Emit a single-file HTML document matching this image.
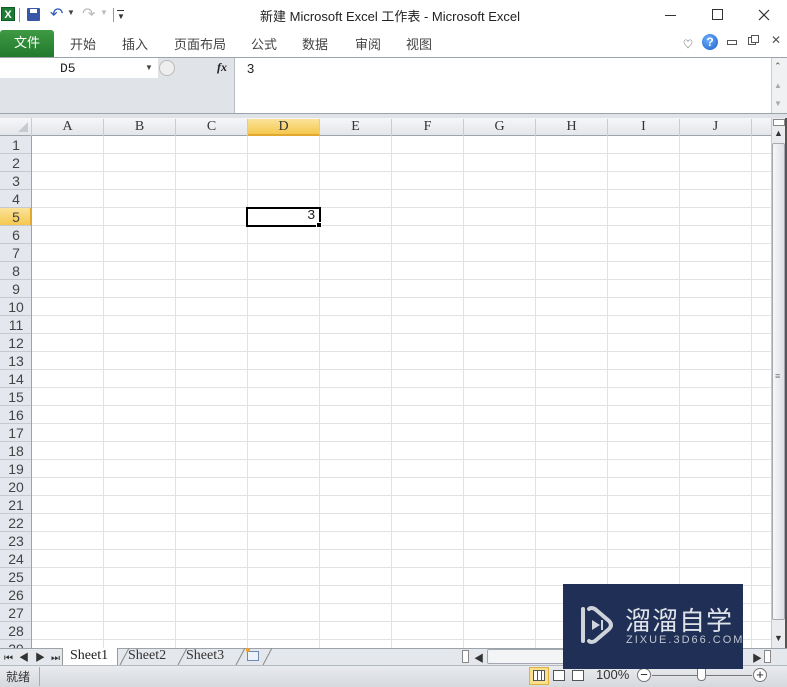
<!DOCTYPE html>
<html><head><meta charset="utf-8">
<style>
*{margin:0;padding:0;box-sizing:border-box}
body{width:787px;height:687px;position:relative;overflow:hidden;background:#fff;font-family:"Liberation Sans","Noto Sans CJK SC",sans-serif;font-size:13px;color:#222}
.a{position:absolute}
.tab{position:absolute;top:34px;font-size:13px;color:#444}
.ch{position:absolute;top:119px;height:17px;text-align:center;font-family:"Liberation Serif",serif;font-size:14px;color:#333;border-right:1px solid #c8ccd2}
.rh{position:absolute;left:0;width:32px;height:18px;text-align:center;font-size:14px;color:#444;line-height:18px;font-family:"Liberation Sans",sans-serif}
</style></head><body>
<div class="a" style="left:0;top:0;width:787px;height:30px;background:#fff"></div>
<div class="a" style="left:1px;top:7px;width:14px;height:14px;background:#1e7b34;color:#fff;font-size:11px;font-weight:bold;text-align:center;line-height:14px;border:1px solid #0d5a22">X</div>
<div class="a" style="left:19px;top:8px;width:1px;height:14px;background:#999"></div>
<div class="a" style="left:27px;top:8px;width:13px;height:13px;background:#3a56a8;border-radius:1px"></div>
<div class="a" style="left:30px;top:9px;width:7px;height:4px;background:#fff"></div>
<div class="a" style="left:50px;top:4px;font-size:16px;color:#2a5bb8">↶</div>
<div class="a" style="left:67px;top:8px;font-size:8px;color:#444">▼</div>
<div class="a" style="left:82px;top:4px;font-size:16px;color:#bbb">↷</div>
<div class="a" style="left:100px;top:8px;font-size:8px;color:#bbb">▼</div>
<div class="a" style="left:113px;top:8px;width:1px;height:14px;background:#999"></div>
<div class="a" style="left:117px;top:10px;width:7px;height:1px;background:#333"></div>
<div class="a" style="left:117px;top:12px;font-size:8px;color:#333">▼</div>
<div class="a" style="left:260px;top:6px;font-size:13px;color:#222">新建 Microsoft Excel 工作表 - Microsoft Excel</div>
<div class="a" style="left:665px;top:15px;width:11px;height:1px;background:#333"></div>
<div class="a" style="left:712px;top:9px;width:11px;height:11px;border:1px solid #333"></div>
<svg class="a" style="left:758px;top:9px" width="12" height="12"><path d="M1 1L11 11M11 1L1 11" stroke="#333" stroke-width="1.2"/></svg>
<div class="a" style="left:0;top:30px;width:54px;height:27px;background:linear-gradient(#3e9a43,#217a2c);border-radius:3px 3px 0 0;color:#fff;font-size:13px;text-align:center;line-height:26px">文件</div>
<div class="tab" style="left:70px">开始</div>
<div class="tab" style="left:122px">插入</div>
<div class="tab" style="left:174px">页面布局</div>
<div class="tab" style="left:251px">公式</div>
<div class="tab" style="left:302px">数据</div>
<div class="tab" style="left:355px">审阅</div>
<div class="tab" style="left:406px">视图</div>
<div class="a" style="left:683px;top:36px;font-size:10px;color:#555">♡</div>
<div class="a" style="left:702px;top:34px;width:16px;height:16px;border-radius:50%;background:radial-gradient(circle at 40% 35%,#6fb0ff,#1a5fc8);color:#fff;font-size:12px;font-weight:bold;text-align:center;line-height:16px">?</div>
<div class="a" style="left:727px;top:40px;width:10px;height:5px;border:1px solid #555"></div>
<div class="a" style="left:748px;top:37px;width:8px;height:8px;border:1px solid #555"></div>
<div class="a" style="left:751px;top:35px;width:8px;height:8px;border:1px solid #555;background:#fff"></div>
<div class="a" style="left:771px;top:33px;font-size:12px;color:#555">✕</div>
<div class="a" style="left:0;top:57px;width:787px;height:1px;background:#9da3ab"></div>
<div class="a" style="left:0;top:58px;width:787px;height:56px;background:#fff"></div>
<div class="a" style="left:0;top:78px;width:234px;height:36px;background:#e0e3e8"></div>
<div class="a" style="left:0;top:58px;width:157px;height:20px;background:#fff"></div>
<div class="a" style="left:60px;top:61px;font-family:'Liberation Mono',monospace;font-size:13px">D5</div>
<div class="a" style="left:145px;top:63px;font-size:8px;color:#444">▼</div>
<div class="a" style="left:158px;top:58px;width:76px;height:20px;background:#e0e3e8"></div>
<div class="a" style="left:159px;top:60px;width:16px;height:16px;border-radius:50%;border:1px solid #bbb;background:#eee"></div>
<div class="a" style="left:217px;top:60px;font-family:'Liberation Serif',serif;font-style:italic;font-weight:bold;font-size:12px">fx</div>
<div class="a" style="left:234px;top:58px;width:1px;height:56px;background:#b8bcc3"></div>
<div class="a" style="left:247px;top:61px;font-size:13px">3</div>
<div class="a" style="left:771px;top:58px;width:16px;height:56px;background:#f0f1f3;border-left:1px solid #ccc"></div>
<div class="a" style="left:774px;top:61px;font-size:9px;color:#555">⌃</div>
<div class="a" style="left:774px;top:81px;font-size:8px;color:#aaa">▲</div>
<div class="a" style="left:774px;top:99px;font-size:8px;color:#aaa">▼</div>
<div class="a" style="left:0;top:113px;width:787px;height:5px;background:#dfe2e7;border-top:1px solid #9da3ab"></div>
<div class="a" style="left:32px;top:136px;width:739px;height:512px;background:
repeating-linear-gradient(90deg,transparent 0 71px,#e0e2e4 71px 72px),
repeating-linear-gradient(180deg,transparent 0 17px,#e0e2e4 17px 18px);"></div>
<div class="a" style="left:0;top:118px;width:771px;height:18px;background:linear-gradient(#f6f7f9,#e3e6ea);border-bottom:1px solid #9da3ab"></div>
<div class="a" style="left:0;top:118px;width:32px;height:18px;border-right:1px solid #c8ccd2"></div>
<svg class="a" style="left:18px;top:122px" width="10" height="10"><path d="M10 0L10 10L0 10Z" fill="#c7cbd1"/></svg>
<div class="ch" style="left:32px;width:72px">A</div>
<div class="ch" style="left:104px;width:72px">B</div>
<div class="ch" style="left:176px;width:72px">C</div>
<div class="ch" style="left:248px;width:72px;background:linear-gradient(#fbe39a,#f5c84f);border-bottom:2px solid #e0a82e">D</div>
<div class="ch" style="left:320px;width:72px">E</div>
<div class="ch" style="left:392px;width:72px">F</div>
<div class="ch" style="left:464px;width:72px">G</div>
<div class="ch" style="left:536px;width:72px">H</div>
<div class="ch" style="left:608px;width:72px">I</div>
<div class="ch" style="left:680px;width:72px">J</div>
<div class="a" style="left:0;top:136px;width:32px;height:512px;background:repeating-linear-gradient(180deg,#e4e8ee 0 17px,#c5cad1 17px 18px);border-right:1px solid #9da3ab"></div>
<div class="a" style="left:0;top:208px;width:32px;height:17px;background:linear-gradient(#fbe39a,#f5c84f);border-right:2px solid #e0a82e"></div>
<div id="rows"></div>
<script>
var h='';for(var i=1;i<=29;i++){h+='<div class="rh" style="top:'+(136+(i-1)*18)+'px">'+i+'</div>';}
document.getElementById('rows').innerHTML=h;
</script>
<div class="a" style="left:246px;top:207px;width:75px;height:20px;border:2px solid #000"></div>
<div class="a" style="left:316px;top:222px;width:6px;height:6px;background:#000;border:1px solid #fff"></div>
<div class="a" style="left:307px;top:208px;font-family:'Liberation Mono',monospace;font-size:14px">3</div>
<div class="a" style="left:771px;top:118px;width:16px;height:530px;background:#e9ebee;border-left:1px solid #c5c9cf;border-right:2px solid #555"></div>
<div class="a" style="left:773px;top:119px;width:12px;height:7px;border:1px solid #888;background:#fff"></div>
<div class="a" style="left:774px;top:128px;font-size:9px;color:#333">▲</div>
<div class="a" style="left:772px;top:143px;width:13px;height:477px;background:linear-gradient(90deg,#f6f7f9,#dde0e5);border:1px solid #a4a9b1;border-radius:2px"></div>
<div class="a" style="left:775px;top:371px;font-size:9px;color:#777">≡</div>
<div class="a" style="left:774px;top:633px;font-size:9px;color:#333">▼</div>
<div class="a" style="left:0;top:648px;width:787px;height:17px;background:#e4e7eb;border-top:1px solid #9da3ab"></div>
<div class="a" style="left:4px;top:649px;font-size:10px;color:#333;letter-spacing:6px">⏮◀▶⏭</div>
<div class="a" style="left:62px;top:648px;width:56px;height:17px;background:#fff;border-left:1px solid #999;border-right:1px solid #999"></div>
<div class="a" style="left:70px;top:648px;font-family:'Liberation Serif',serif;font-size:14px">Sheet1</div>
<div class="a" style="left:128px;top:648px;font-family:'Liberation Serif',serif;font-size:14px;color:#333">Sheet2</div>
<div class="a" style="left:186px;top:648px;font-family:'Liberation Serif',serif;font-size:14px;color:#333">Sheet3</div>
<svg class="a" style="left:115px;top:648px" width="160" height="17"><path d="M5 17L14 0M63 17L72 0M121 17L130 0M148 17L157 0" stroke="#888" fill="none"/></svg>
<div class="a" style="left:247px;top:651px;width:12px;height:10px;border:1px solid #6a8ab8;background:#eef3fb"></div>
<div class="a" style="left:246px;top:648px;width:4px;height:4px;background:#f0a020;border-radius:50%"></div>
<div class="a" style="left:462px;top:650px;width:7px;height:13px;border:1px solid #888;background:#fff"></div>
<div class="a" style="left:474px;top:650px;font-size:10px;color:#333">◀</div>
<div class="a" style="left:487px;top:649px;width:80px;height:15px;background:#f3f4f6;border:1px solid #a4a9b1;border-radius:2px"></div>
<div class="a" style="left:752px;top:650px;font-size:10px;color:#333">▶</div>
<div class="a" style="left:764px;top:650px;width:7px;height:13px;border:1px solid #888;background:#fff"></div>
<div class="a" style="left:0;top:665px;width:787px;height:22px;background:linear-gradient(#e9ebee,#d6d9de);border-top:1px solid #b5bac1"></div>
<div class="a" style="left:6px;top:668px;font-size:12px;color:#333">就绪</div>
<div class="a" style="left:39px;top:667px;width:1px;height:19px;background:#aaa"></div>
<div class="a" style="left:529px;top:667px;width:20px;height:18px;background:#fbe08a;border:1px solid #e0b040"></div>
<div class="a" style="left:533px;top:670px;width:12px;height:11px;border:1px solid #555;background:repeating-linear-gradient(90deg,#fff 0 3px,#555 3px 4px)"></div>
<div class="a" style="left:553px;top:670px;width:12px;height:11px;border:1px solid #555;background:#fff"></div>
<div class="a" style="left:572px;top:670px;width:12px;height:11px;border:1px solid #555;background:#fff"></div>
<div class="a" style="left:596px;top:667px;font-size:13px;color:#333">100%</div>
<div class="a" style="left:637px;top:668px;width:14px;height:14px;border-radius:50%;border:1px solid #777;background:#fff;text-align:center;line-height:11px;font-size:13px">−</div>
<div class="a" style="left:652px;top:675px;width:100px;height:1px;background:#777"></div>
<div class="a" style="left:697px;top:668px;width:9px;height:13px;background:#fff;border:1px solid #777;border-radius:0 0 4px 4px"></div>
<div class="a" style="left:753px;top:668px;width:14px;height:14px;border-radius:50%;border:1px solid #777;background:#fff;text-align:center;line-height:12px;font-size:13px">+</div>
<div class="a" style="left:563px;top:584px;width:180px;height:85px;background:#1f2f55"></div>
<svg class="a" style="left:575px;top:603px" width="40" height="44"><path d="M8 6 L8 38" stroke="#cfd3da" stroke-width="4" stroke-linecap="round" fill="none"/><path d="M14 6 Q16 4 20 6 L34 18 Q38 22 34 26 L20 38 Q16 40 14 38" stroke="#cfd3da" stroke-width="4" fill="none" stroke-linecap="round"/><path d="M17 17 L25 22 L17 27Z M26 17 L28 17 L28 27 L26 27Z" fill="#cfd3da"/></svg>
<div class="a" style="left:625px;top:601px;font-size:26px;color:#dfe2e8;letter-spacing:1px">溜溜自学</div>
<div class="a" style="left:626px;top:634px;font-size:11px;color:#c0c5cf;letter-spacing:2px">ZIXUE.3D66.COM</div>
</body></html>
